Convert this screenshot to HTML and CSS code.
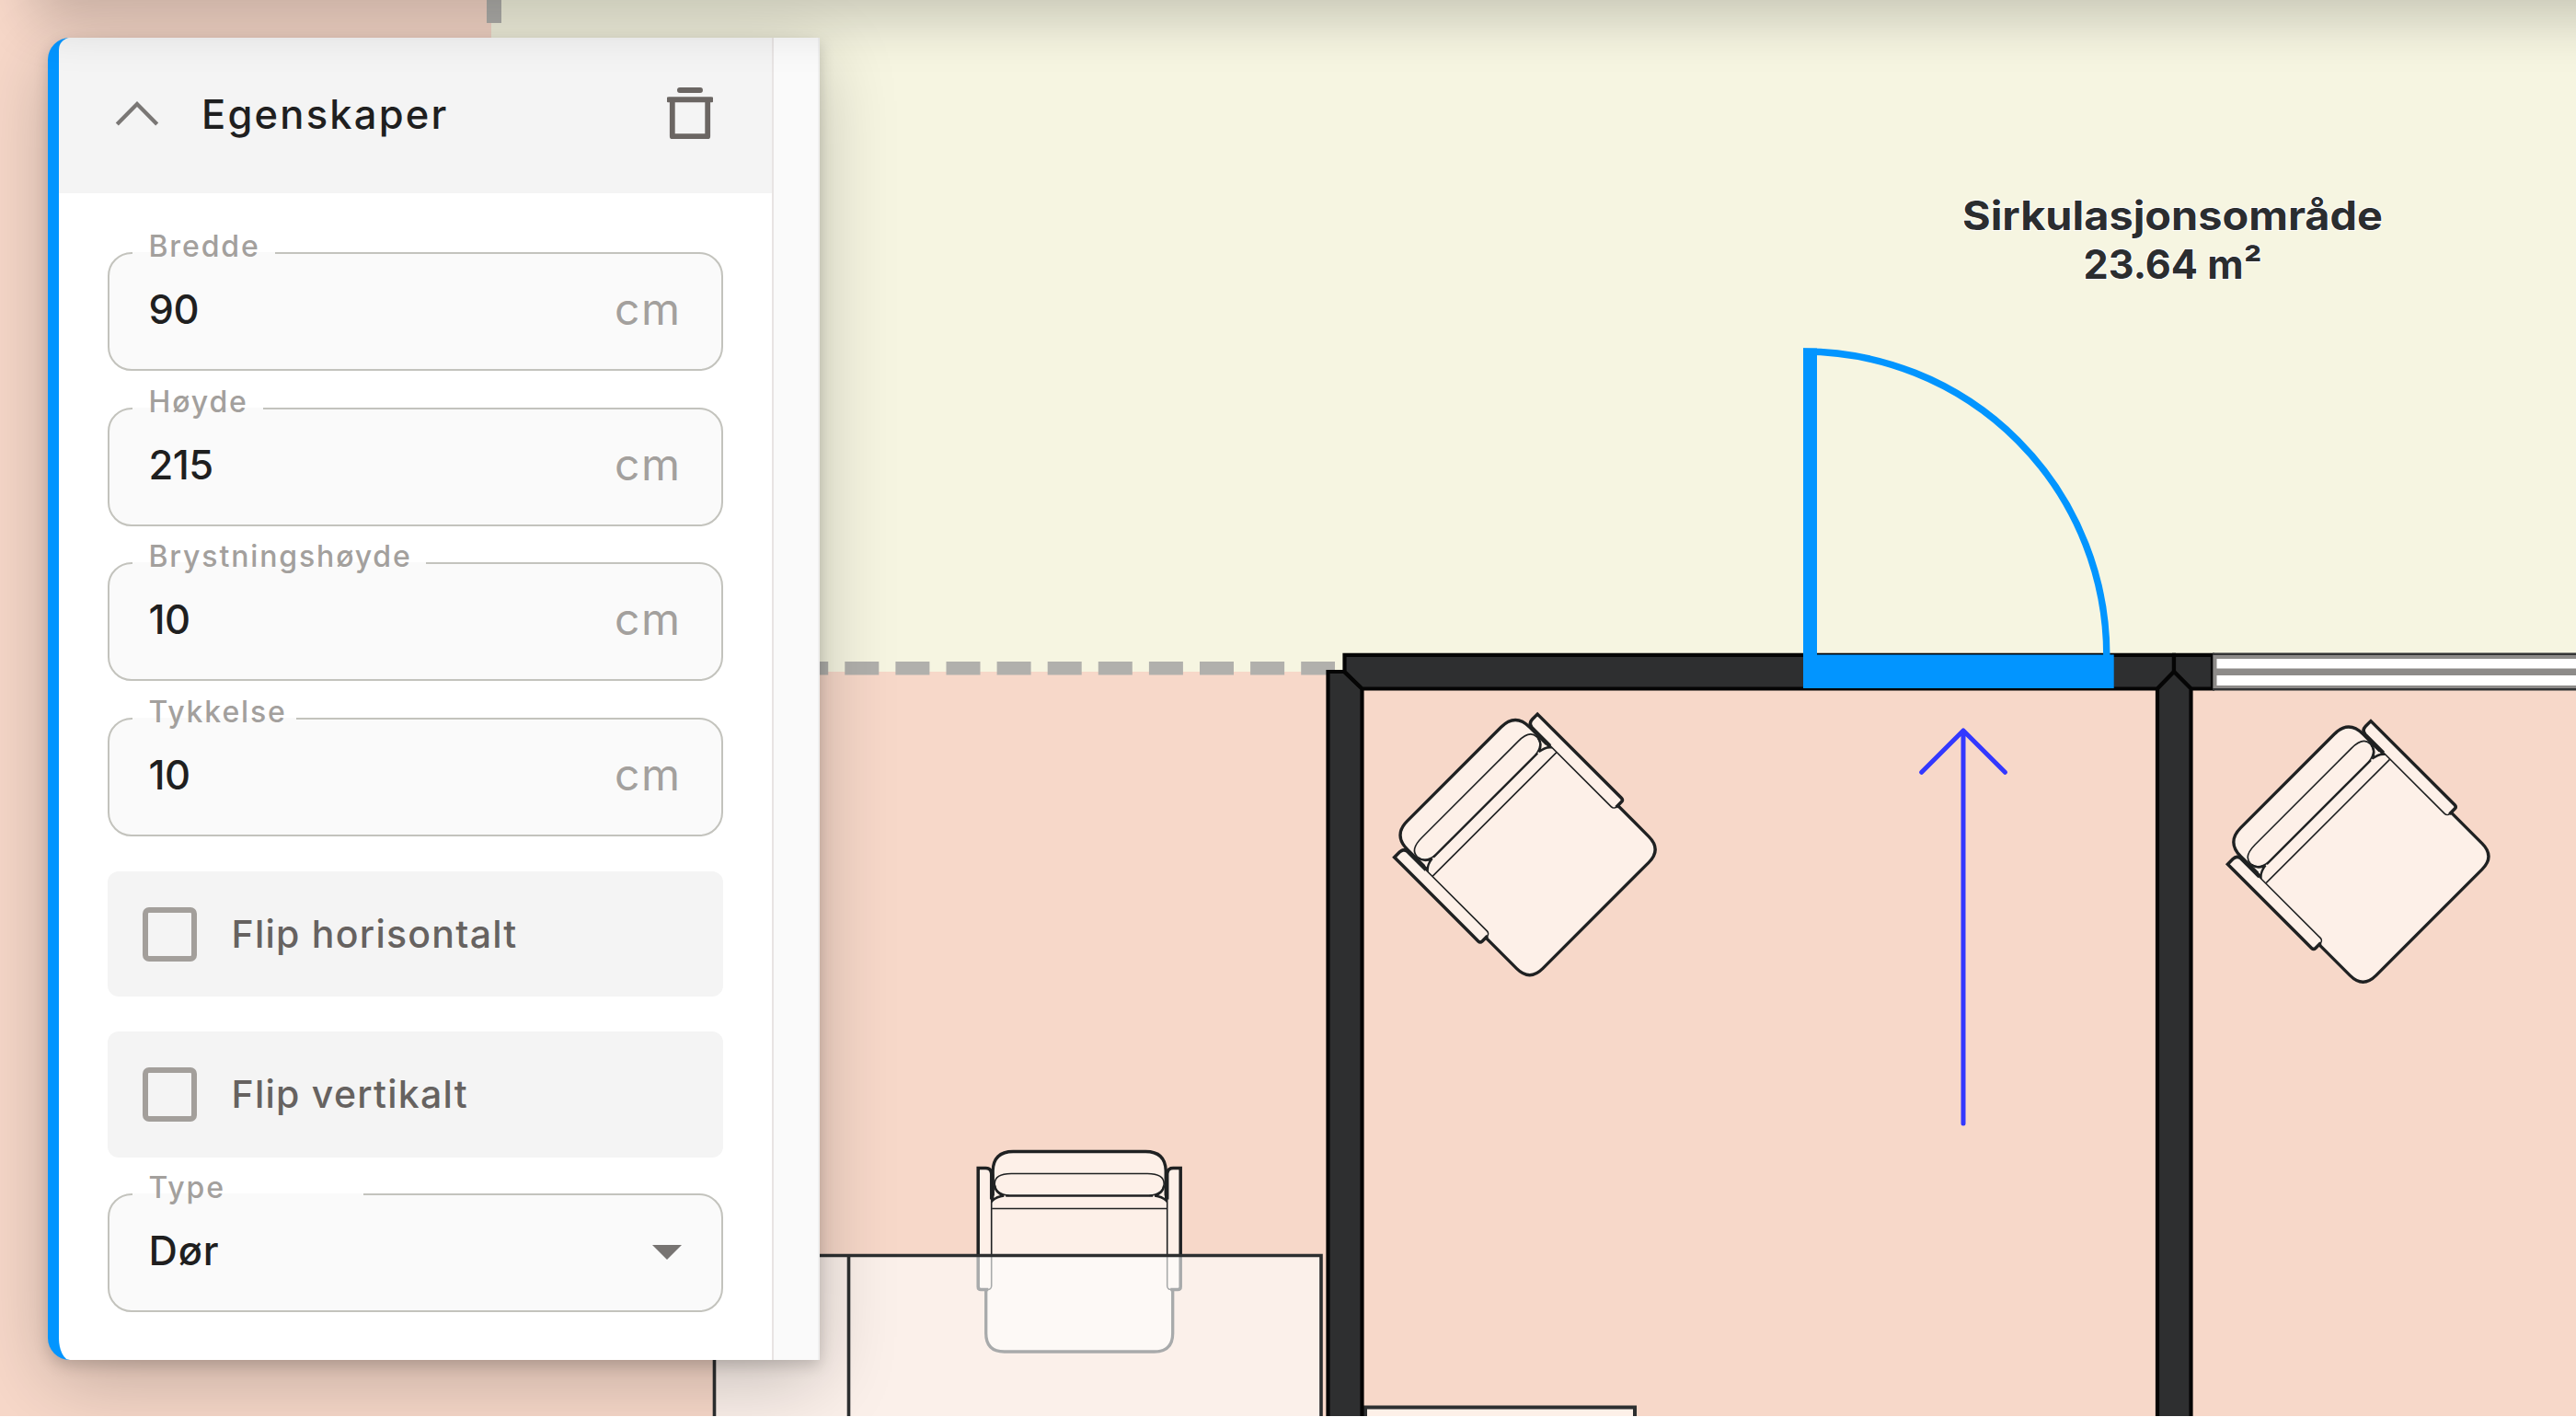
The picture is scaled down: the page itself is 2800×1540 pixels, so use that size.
FILE: index.html
```html
<!DOCTYPE html>
<html lang="no">
<head>
<meta charset="utf-8">
<title>Egenskaper</title>
<link rel="stylesheet" href="styles.css">
</head>
<body>
<main class="editor">
  <svg class="plan" width="2800" height="1539" viewBox="0 0 2800 1539">
    <defs>
      <g id="chair">
        <path class="chair-outer" d="M-101.500 20V179.500Q-101.500 199.500-81.500 199.500H81.500Q101.500 199.500 101.500 179.500V20Z"/>
        <path class="chair-outer" d="M-94 32V4Q-94-18-72-18H72Q94-18 94 4V32"/>
        <rect class="chair-fill" x="-95" y="30" width="190" height="60"/>
        <path class="chair-inner" d="M-95 44H95"/>
        <path class="chair-inner" d="M-76 30Q-92 28-92 17Q-92 6-74 6H74Q92 6 92 17Q92 28 76 30"/>
        <path class="chair-mid" d="M-80 30H80"/>
        <path class="chair-mid" d="M-92 19Q-91 27-82 30Q-90 31-94 35V7M92 19Q91 27 82 30Q90 31 94 35V7"/>
        <rect class="chair-inner" x="-110" y="0" width="14.500" height="132" rx="4"/>
        <rect class="chair-inner" x="95.500" y="0" width="14.500" height="132" rx="4"/>
        <path class="chair-edge" d="M-95.500 34V6Q-96 0-102 0H-110V129Q-110 132-107 132H-99M95.500 34V6Q96 0 102 0H110V129Q110 132 107 132H99"/>
      </g>
    </defs>
    <rect class="room" width="2800" height="1539"/>
    <rect class="circulation" x="534" width="2266" height="730"/>
    <path class="divider" d="M537 0V25" stroke-width="16"/>
    <path class="divider" d="M863.200 726.300H1451" stroke-width="14.500" stroke-dasharray="37 18.100"/>

    <use href="#chair" transform="translate(1173.200 1269.500)"/>
    <use href="#chair" transform="translate(1593.400 853.900) rotate(-45)"/>
    <use href="#chair" transform="translate(2499.200 861.400) rotate(-45)"/>

    <path class="desk" d="M776.500 1545V1364.500H1436V1545M922.500 1364.500V1545"/>
    <path class="desk-light" d="M1484 1545V1529.500H1777V1545"/>

    <path class="wall" d="M1443.500 1545V730H1461L1480.500 748.500V1545"/>
    <path class="wall" d="M1461.500 711.800H2363V730L2345 748.500H1480.500L1461.500 730Z"/>
    <path class="wall" d="M2363 711.800H2405V748.500H2381.500L2363 730Z"/>
    <path class="wall" d="M2345 1545V748.500L2363 730L2381.500 748.500V1545"/>
    <rect x="2405" y="709.500" width="395" height="41" fill="#333435"/>
    <rect x="2405.500" y="712" width="394.500" height="36" fill="#8d8b89"/>
    <path d="M2409.500 716H2800V726.500H2409.500ZM2409.500 734H2800V745H2409.500Z" fill="#fff"/>

    <path class="door" d="M1960 711.500H2297.700V748H1960ZM1960 378.500H1975V712H1960Z"/>
    <path class="swing" d="M1960 382A330 330 0 0 1 2289.800 713"/>
    <path class="arrow" d="M2134 1221V794M2088.700 839.300L2134 794L2179.400 839.300"/>

    <text class="room-name" x="2133" y="249.500" textLength="457" lengthAdjust="spacingAndGlyphs">Sirkulasjonsområde</text>
    <text class="room-name" x="2264.500" y="303" textLength="194" lengthAdjust="spacingAndGlyphs">23.64 m²</text>
  </svg>

  <aside class="panel">
    <div class="content">
      <header class="head">
        <svg class="chevron" width="50" height="30" viewBox="0 0 50 30"><path d="M3.300 26L25 4L46.700 26"/></svg>
        <h1 class="title">Egenskaper</h1>
        <svg class="trash" width="50" height="58" viewBox="0 0 50 58"><path d="M14 3H36M2 13.200H48" stroke-width="6" stroke-linecap="round"/><path d="M5.800 14V53.200H44.200V14" stroke-width="5.800" stroke-linejoin="round"/></svg>
      </header>
      <div class="form">
        <div class="field bredde"><fieldset><legend></legend></fieldset><label>Bredde</label><span class="value">90</span><span class="unit">cm</span></div>
        <div class="field hoyde"><fieldset><legend></legend></fieldset><label>Høyde</label><span class="value">215</span><span class="unit">cm</span></div>
        <div class="field brystning"><fieldset><legend></legend></fieldset><label>Brystningshøyde</label><span class="value">10</span><span class="unit">cm</span></div>
        <div class="field tykkelse"><fieldset><legend></legend></fieldset><label>Tykkelse</label><span class="value">10</span><span class="unit">cm</span></div>
        <div class="check"><i class="box"></i><span>Flip horisontalt</span></div>
        <div class="check"><i class="box"></i><span>Flip vertikalt</span></div>
        <div class="field type"><fieldset><legend></legend></fieldset><label>Type</label><span class="value name">Dør</span><i class="caret"></i></div>
      </div>
    </div>
    <div class="gutter"></div>
  </aside>
  <div class="topbar"></div>
</main>
</body>
</html>
```
FILE: styles.css
```css
* { box-sizing: border-box; }
body { margin: 0; background: #fff; font-family: Inter, "Noto Sans", sans-serif; }
.editor { position: relative; width: 2800px; height: 1539px; overflow: hidden; }
.plan { display: block; }

/* floor plan */
.room { fill: #f7d8c9; }
.circulation { fill: #f6f5e1; }
.divider { stroke: #b1b0ac; fill: none; }
.chair-fill { fill: #fdf0e8; }
.chair-outer, .chair-edge, .chair-inner, .chair-mid { stroke: #1f2122; fill: #fdf0e8; }
.chair-outer { stroke-width: 3.3; }
.chair-inner { stroke-width: 1.6; }
.chair-mid { stroke-width: 2.4; fill: none; }
.chair-edge { stroke-width: 3.5; fill: none; }
.desk { fill: rgba(253, 255, 255, .62); stroke: #2d2f30; stroke-width: 3.6; }
.desk-light { fill: #fdf0e8; stroke: #2d2f30; stroke-width: 4; }
.wall { fill: #2e2f30; stroke: #050505; stroke-width: 4.2; }
.door { fill: #0295ff; }
.swing { fill: none; stroke: #0295ff; stroke-width: 7.4; }
.arrow { fill: none; stroke: #3338ff; stroke-width: 5; stroke-linecap: round; stroke-linejoin: round; }
.room-name { font-size: 43.500px; font-weight: 700; fill: #2b2d2f; stroke: #fff; stroke-width: 2px; paint-order: stroke; }

/* properties panel */
.panel {
  position: absolute; left: 52px; top: 41px; width: 839px; height: 1436.500px;
  display: flex; background: #fff; border-left: 12px solid #0295ff;
  border-radius: 24px 0 0 24px;
  box-shadow: 0 22px 84px rgba(0, 0, 0, .22), 0 6px 16px rgba(0, 0, 0, .17);
}
.content { width: 774.500px; }
.gutter { flex: 1; background: #fafafa; border-left: 2px solid #e8e4e3; border-right: 2px solid #f0f0f0; }
.head {
  height: 169px; display: flex; align-items: flex-start; padding: 54px 63.500px 0 60px;
  background: #f4f4f4; border-top-left-radius: 13px;
}
.chevron { margin-top: 14px; fill: none; stroke: #7a7775; stroke-width: 4.300; }
.title { margin: 1px auto 0 45px; font-size: 43.500px; line-height: 56px; font-weight: 500; letter-spacing: 2.200px; color: #1f1f1f; }
.trash { fill: none; stroke: #6b6663; }
.form { padding: 64px 53px 0 52.500px; display: flex; flex-direction: column; }
.field {
  position: relative; height: 129px; margin-bottom: 39.700px; padding: 0 45px 5px 45px;
  display: flex; align-items: center; justify-content: space-between;
  background: #fafafa; border-radius: 26px;
  font-size: 43.500px; line-height: 54px;
}
.field fieldset {
  position: absolute; inset: 0; margin: 0; padding: 0 0 0 25px;
  border: 2px solid #c3c3bd; border-radius: 26px;
}
.field legend { height: 2px; padding: 0; }
.field label {
  position: absolute; left: 45px; top: -26px; font-size: 32px; line-height: 40px;
  font-weight: 500; letter-spacing: 1.850px; color: #a3a09d; white-space: nowrap;
}
.value { font-weight: 500; color: #1f1f1f; letter-spacing: -.5px; }
.name { letter-spacing: .8px; }
.unit { font-size: 48px; letter-spacing: 1.500px; color: #a3a09d; }
.bredde legend { width: 155px; }
.hoyde legend { width: 142px; }
.brystning legend { width: 319px; }
.tykkelse legend { width: 178px; }
.type legend { width: 251px; }
.check {
  height: 136.700px; margin-bottom: 37.600px; padding-left: 38px;
  display: flex; align-items: center; gap: 38px;
  background: #f4f4f4; border-radius: 12px;
  font-size: 41px; font-weight: 500; letter-spacing: 1.250px; color: #666260;
}
.check:nth-of-type(5) { margin-top: -2px; }
.box { width: 59px; height: 59px; border: 6px solid #a39f9b; border-radius: 7px; }
.type { margin: 2px 0 0; }
.caret { border: 16px solid transparent; border-top-color: #777472; border-bottom: 0; margin-top: 4px; }

/* bar above the canvas, only its shadow reaches the view */
.topbar {
  position: absolute; left: 36px; right: -100px; top: -100px; height: 100px;
  box-shadow: 0 20px 60px rgba(0, 0, 0, .2);
}
```
